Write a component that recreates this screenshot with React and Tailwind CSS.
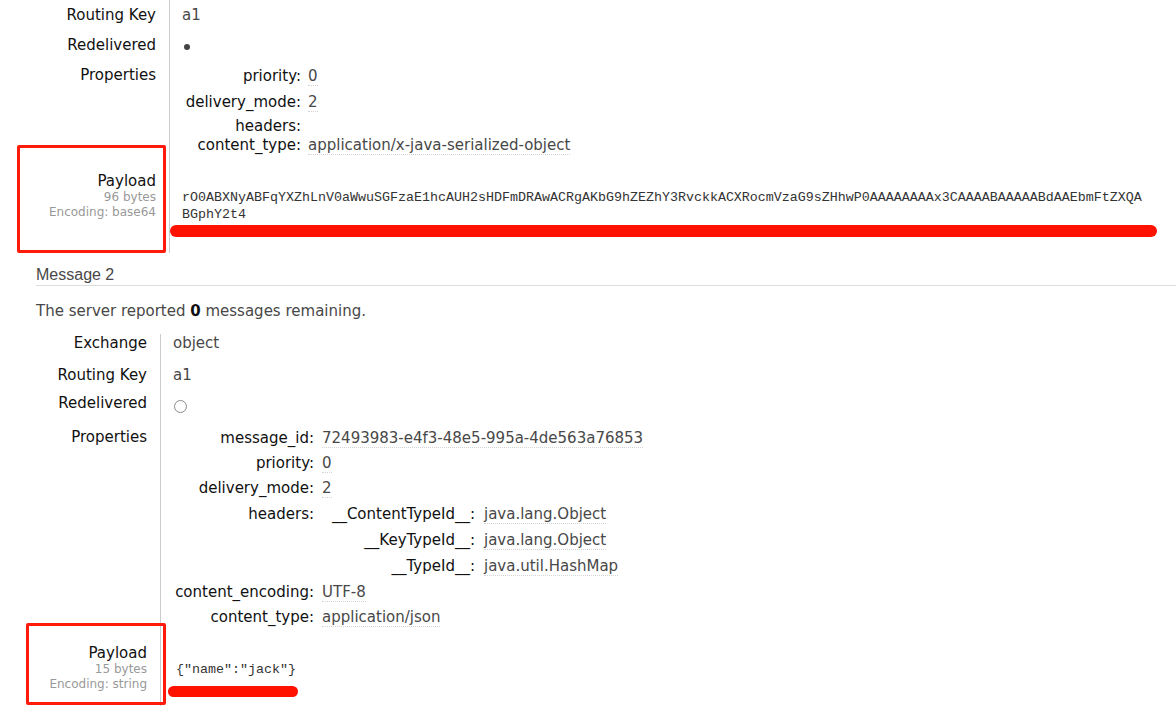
const PAY1 =
  "rO0ABXNyABFqYXZhLnV0aWwuSGFzaE1hcAUH2sHDFmDRAwACRgAKbG9hZEZhY3RvckkACXRocmVzaG9sZHhwP0AAAAAAAAx3CAAAABAAAAABdAAEbmFtZXQA";
const PAY2 = "BGphY2t4";

function Label({ cls, children }) {
  return <div className={"text-right pr-[13px] leading-[18px] text-[#111] whitespace-nowrap " + cls}>{children}</div>;
}

function Cell({ cls, children }) {
  return <div className={"border-l border-[#ccc] pl-[12px] leading-[18px] " + cls}>{children}</div>;
}

function V({ children }) {
  return (
    <span className="inline-block border-b border-dotted border-[#d4d4d4] leading-[18px] text-[#484848] whitespace-nowrap">
      {children}
    </span>
  );
}

function PayloadLabel({ bytes, enc }) {
  return (
    <>
      <div className="leading-[17px] text-[#111]">Payload</div>
      <div className="text-[12px] leading-[15px] text-[#999]">{bytes}</div>
      <div className="text-[12px] leading-[15px] text-[#999]">{enc}</div>
    </>
  );
}

const mono = "font-['Liberation_Mono','Courier_New',monospace] text-[13.33px] text-[#333]";

export default function App() {
  return (
    <div className="relative w-[1176px] h-[719px] overflow-hidden bg-white font-['DejaVu_Sans',Verdana,sans-serif] text-[15px] text-[#111]">
      <div className="pl-[36px] pt-[1px]">
        {/* Message 1 (continued) */}
        <div className="grid grid-cols-[133px_1fr] -mt-[1px]">
          <Label cls="h-[31px] pt-[6px]">Routing Key</Label>
          <Cell cls="h-[31px] pt-[6px]">
            <span className="text-[#484848]">a1</span>
          </Cell>

          <Label cls="h-[30px] pt-[5px]">Redelivered</Label>
          <Cell cls="h-[30px]">
            <div className="mt-[13px] ml-[2px] w-[6px] h-[6px] rounded-full bg-[#444]" />
          </Cell>

          <Label cls="h-[111px] pt-[5px]">Properties</Label>
          <Cell cls="h-[111px] pt-[6px]">
            <div className="flex h-[26px]">
              <div className="w-[119px] text-right">priority:</div>
              <div className="pl-[7px]"><V>0</V></div>
            </div>
            <div className="flex h-[24px]">
              <div className="w-[119px] text-right">delivery_mode:</div>
              <div className="pl-[7px]"><V>2</V></div>
            </div>
            <div className="flex h-[19px]">
              <div className="w-[119px] text-right">headers:</div>
              <div className="pl-[7px]" />
            </div>
            <div className="flex h-[25px]">
              <div className="w-[119px] text-right">content_type:</div>
              <div className="pl-[7px]"><V>application/x-java-serialized-object</V></div>
            </div>
          </Cell>

          <Label cls="h-[81px] pt-[1px]">
            <PayloadLabel bytes="96 bytes" enc="Encoding: base64" />
          </Label>
          <Cell cls="h-[81px] pt-[17px]">
            <div className={mono + " leading-[17px] whitespace-nowrap"}>
              <div>{PAY1}</div>
              <div>{PAY2}</div>
            </div>
          </Cell>
        </div>

        {/* Message 2 heading */}
        <div className="mt-[12px] font-['Liberation_Sans',Arial,sans-serif] text-[16px] leading-[20px] text-[#484848] border-b border-[#ddd]">
          Message 2
        </div>
        <p className="mt-[16px] leading-[18px] text-[#484848]">
          The server reported <b className="text-[#111]">0</b> messages remaining.
        </p>

        {/* Message 2 */}
        <div className="mt-[14px] grid grid-cols-[124px_1fr]">
          <Label cls="h-[32px]">Exchange</Label>
          <Cell cls="h-[32px]">
            <span className="text-[#484848]">object</span>
          </Cell>

          <Label cls="h-[28px]">Routing Key</Label>
          <Cell cls="h-[28px]">
            <span className="text-[#484848]">a1</span>
          </Cell>

          <Label cls="h-[34px]">Redelivered</Label>
          <Cell cls="h-[34px]">
            <div className="mt-[6px] ml-[1px] w-[13px] h-[13px] rounded-full border border-[#8a8a8a] bg-white" />
          </Cell>

          <Label cls="h-[217px]">Properties</Label>
          <Cell cls="h-[217px] pt-[1px]">
            <div className="flex h-[25px]">
              <div className="w-[141px] text-right">message_id:</div>
              <div className="pl-[8px]"><V>72493983-e4f3-48e5-995a-4de563a76853</V></div>
            </div>
            <div className="flex h-[25px]">
              <div className="w-[141px] text-right">priority:</div>
              <div className="pl-[8px]"><V>0</V></div>
            </div>
            <div className="flex h-[26px]">
              <div className="w-[141px] text-right">delivery_mode:</div>
              <div className="pl-[8px]"><V>2</V></div>
            </div>
            <div className="flex h-[78px]">
              <div className="w-[141px] text-right">headers:</div>
              <div className="pl-[8px]">
                <div className="flex h-[26px]">
                  <div className="w-[153px] text-right">__ContentTypeId__:</div>
                  <div className="pl-[9px]"><V>java.lang.Object</V></div>
                </div>
                <div className="flex h-[26px]">
                  <div className="w-[153px] text-right">__KeyTypeId__:</div>
                  <div className="pl-[9px]"><V>java.lang.Object</V></div>
                </div>
                <div className="flex h-[26px]">
                  <div className="w-[153px] text-right">__TypeId__:</div>
                  <div className="pl-[9px]"><V>java.util.HashMap</V></div>
                </div>
              </div>
            </div>
            <div className="flex h-[25px]">
              <div className="w-[141px] text-right">content_encoding:</div>
              <div className="pl-[8px]"><V>UTF-8</V></div>
            </div>
            <div className="flex h-[25px]">
              <div className="w-[141px] text-right">content_type:</div>
              <div className="pl-[8px]"><V>application/json</V></div>
            </div>
          </Cell>

          <Label cls="h-[61px]">
            <PayloadLabel bytes="15 bytes" enc="Encoding: string" />
          </Label>
          <Cell cls="h-[61px] pt-[16px]">
            <div className={mono + " leading-[18px] whitespace-nowrap pl-[3px]"}>{'{"name":"jack"}'}</div>
          </Cell>
        </div>
      </div>

      {/* Red annotations */}
      <div className="absolute left-[17px] top-[145px] w-[149px] h-[108px] border-[3px] border-[#ff1a0a] rounded-[2px]" />
      <div className="absolute left-[170px] top-[225px] w-[987px] h-[12px] rounded-full bg-[#ff1200]" />
      <div className="absolute left-[26px] top-[623px] w-[140px] h-[82px] border-[3px] border-[#ff1a0a] rounded-[2px]" />
      <div className="absolute left-[168px] top-[686px] w-[130px] h-[11px] rounded-full bg-[#ff1200]" />
    </div>
  );
}
